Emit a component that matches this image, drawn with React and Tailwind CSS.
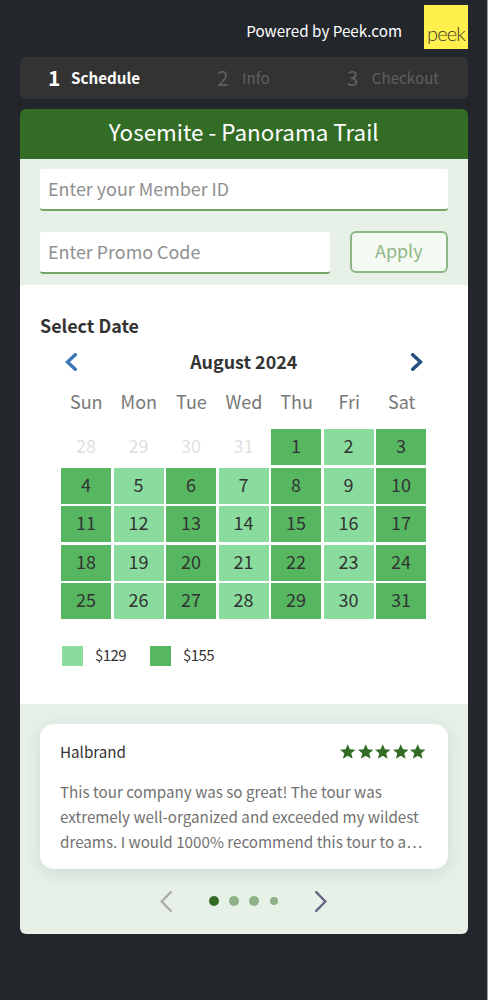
import clsx from 'clsx';

const STEPS = ['Schedule', 'Info', 'Checkout'];
const WEEKDAYS = ['Sun', 'Mon', 'Tue', 'Wed', 'Thu', 'Fri', 'Sat'];

// August 2024 starts on a Thursday, so four July days lead the grid
const DAYS = [28, 29, 30, 31, ...Array.from({ length: 31 }, (_, i) => i + 1)];

function Chevron({ className, width, height, stroke, strokeWidth, flip }) {
  return (
    <svg className={className} width={width} height={height} viewBox={`0 0 ${width} ${height}`} fill="none">
      <path
        d={
          flip
            ? `M${strokeWidth / 2} ${strokeWidth / 2} L${width - strokeWidth * 0.7} ${height / 2} L${strokeWidth / 2} ${height - strokeWidth / 2}`
            : `M${width - strokeWidth / 2} ${strokeWidth / 2} L${strokeWidth * 0.7} ${height / 2} L${width - strokeWidth / 2} ${height - strokeWidth / 2}`
        }
        stroke={stroke}
        strokeWidth={strokeWidth}
        strokeLinecap="round"
      />
    </svg>
  );
}

function Star() {
  return (
    <svg width="15.5" height="15" viewBox="0 0 16 15" fill="#336d25">
      <path d="M8 0 L10.3 5.3 L16 5.7 L11.6 9.3 L13 15 L8 12 L3 15 L4.4 9.3 L0 5.7 L5.7 5.3 Z" />
    </svg>
  );
}

function Header() {
  return (
    <header className="flex h-[57px] items-start justify-end pr-[19px] pt-[5px]">
      <span className="mr-[22px] mt-[13px] text-[15.2px] leading-6 text-white">Powered by Peek.com</span>
      <div className="h-11 w-11 bg-[#fff04d] pt-4 text-center font-['Lato'] text-[20px] font-light leading-6 tracking-[-0.9px] text-[#3c3a2c]">
        peek
      </div>
    </header>
  );
}

function Steps() {
  return (
    <nav className="ml-5 flex h-[42px] w-[447.5px] items-center rounded-md bg-[#333333] pb-[3px]">
      {STEPS.map((step, i) => (
        <div
          key={step}
          className={clsx(
            'flex items-center',
            i === 0 && 'ml-7 font-bold text-white',
            i === 1 && 'ml-[77px] text-[#5f5f5f]',
            i === 2 && 'ml-[77px] text-[#5f5f5f]'
          )}
        >
          <span className="w-[13px] text-[21px] leading-6">{i + 1}</span>
          <span className={clsx('text-[15.2px] leading-6', i === 0 ? 'ml-[10px]' : 'ml-3')}>{step}</span>
        </div>
      ))}
    </nav>
  );
}

function Codes() {
  const field = 'h-[42px] rounded-[3px] border-b-2 border-[#6fa661] bg-white pb-0.5 pl-2 text-[17.9px] outline-none placeholder:text-[#8f8f8f]';
  return (
    <div className="flex h-[126px] flex-col gap-[21px] bg-[#e7f1e8] px-5 pt-[10px]">
      <input className={clsx(field, 'w-full')} placeholder="Enter your Member ID" />
      <div className="flex gap-5">
        <input className={clsx(field, 'w-[290px]')} placeholder="Enter Promo Code" />
        <button className="-mt-px h-[42px] flex-1 rounded-md border-2 border-[#8fb687] bg-[#f4f9f4] pb-1 text-[17.9px] leading-6 text-[#8fb687]">
          Apply
        </button>
      </div>
    </div>
  );
}

function Calendar() {
  return (
    <section className="h-[419px] bg-white pt-7 text-[#333333]">
      <h2 className="pl-5 text-[17.9px] font-bold leading-6">Select Date</h2>
      <div className="mt-3 flex h-6 items-center justify-between pl-[45px] pr-[45px]">
        <Chevron className="mt-0.5" width={12} height={18} stroke="#3b78b8" strokeWidth={3.5} />
        <span className="text-[17.9px] font-bold leading-6">August 2024</span>
        <Chevron className="mt-0.5" width={12} height={18} stroke="#255080" strokeWidth={3.5} flip />
      </div>
      <div className="ml-10 mt-[14px] grid w-[368px] grid-cols-7 text-center text-[18px] leading-7 text-[#777777]">
        {WEEKDAYS.map((d) => (
          <span key={d}>{d}</span>
        ))}
      </div>
      <div className="ml-[41px] mt-[14px] grid w-[365px] grid-cols-7 gap-x-[2.5px] gap-y-[2.5px] text-[18px]">
        {DAYS.map((day, i) => (
          <div
            key={i}
            className={clsx(
              'flex h-[36px] items-center justify-center pb-1 leading-6',
              i < 4 && 'text-[#e0e0e0]',
              i >= 4 && (i % 7) % 2 === 0 && 'bg-[#57b761]',
              i >= 4 && (i % 7) % 2 === 1 && 'bg-[#89dc9d]'
            )}
          >
            {day}
          </div>
        ))}
      </div>
      <div className="ml-[42px] mt-[27px] flex h-5 items-center text-[15px] leading-5 tracking-[-0.6px]">
        <span className="h-5 w-[21px] bg-[#89dc9d]" />
        <span className="mb-0.5 ml-3 w-[55px]">$129</span>
        <span className="h-5 w-[21px] bg-[#57b761]" />
        <span className="mb-0.5 ml-3">$155</span>
      </div>
    </section>
  );
}

function Reviews() {
  return (
    <section className="h-[230px] bg-[#e7f1e8] px-5 pt-5">
      <div className="h-[145px] rounded-[14px] bg-white px-5 pt-[15px] shadow-[0_4px_16px_rgba(70,100,120,0.16)]">
        <div className="flex items-center justify-between pr-0.5">
          <span className="text-[15.2px] leading-6 text-[#333333]">Halbrand</span>
          <div className="flex gap-0.5">
            {[1, 2, 3, 4, 5].map((n) => (
              <Star key={n} />
            ))}
          </div>
        </div>
        <p className="mt-4 whitespace-nowrap text-[15.2px] leading-[25px] text-[#717171]">
          This tour company was so great! The tour was
          <br />
          extremely well-organized and exceeded my wildest
          <br />
          dreams. I would 1000% recommend this tour to a…
        </p>
      </div>
      <div className="ml-[120px] mt-[21px] flex h-[22px] items-center">
        <Chevron width={12} height={21} stroke="#a9aeaa" strokeWidth={2.4} />
        <div className="ml-[37px] flex items-center gap-[10px]">
          <span className="h-[10px] w-[10px] rounded-full bg-[#336d25]" />
          <span className="h-[10px] w-[10px] rounded-full bg-[#8fb187]" />
          <span className="h-[10px] w-[10px] rounded-full bg-[#8fb187]" />
          <span className="ml-px h-2 w-2 rounded-full bg-[#8fb187]" />
        </div>
        <Chevron className="ml-[37px]" width={12} height={21} stroke="#666885" strokeWidth={2.4} flip />
      </div>
    </section>
  );
}

export default function App() {
  return (
    <div className="h-[1000px] w-[488px] border-r border-[#9b9da0] bg-[#23262b] font-['Noto_Sans_CJK_SC',sans-serif]">
      <Header />
      <Steps />
      <main className="ml-5 mt-[10px] w-[447.5px] overflow-hidden rounded-md">
        <h1 className="h-[50px] bg-[#336d25] text-center text-[22.4px] leading-[45px] text-white">
          Yosemite - Panorama Trail
        </h1>
        <Codes />
        <Calendar />
        <Reviews />
      </main>
    </div>
  );
}
